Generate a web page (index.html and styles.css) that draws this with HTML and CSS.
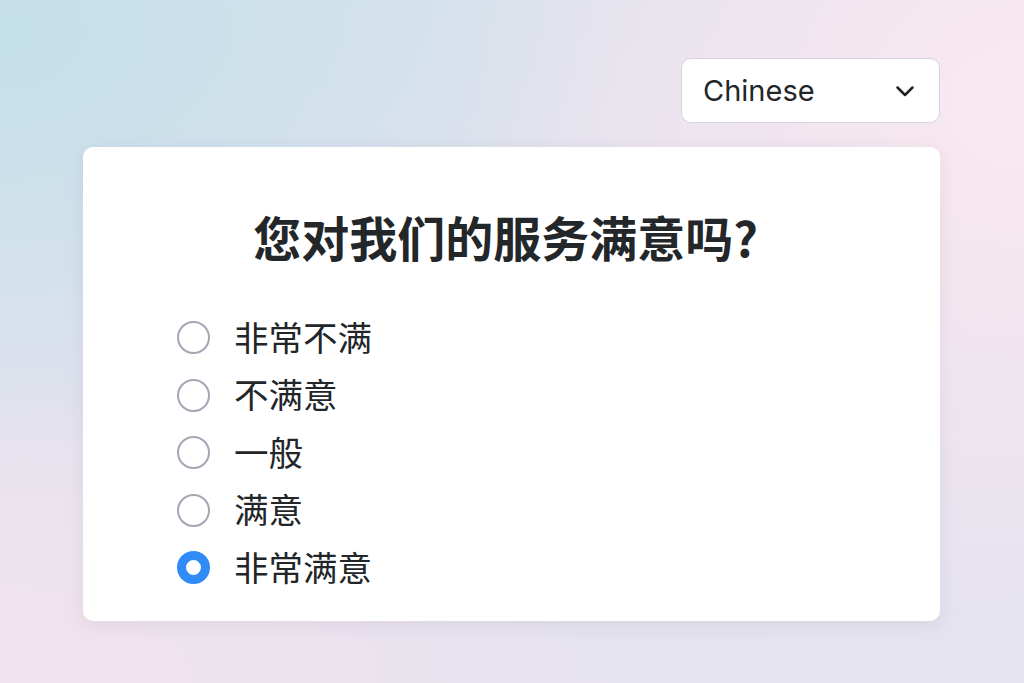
FILE: index.html
```html
<!DOCTYPE html>
<html lang="zh">
<head>
<meta charset="utf-8">
<link rel="stylesheet" href="styles.css">
</head>
<body>
<div class="page">
  <div class="topbar">
    <div class="select">
      <span class="select-label">Chinese</span>
      <svg class="chevron" width="24" height="24" viewBox="0 0 24 24"><path d="M4.5 8.5 L12 16 L19.5 8.5" fill="none" stroke="#222" stroke-width="2.5" stroke-linecap="round" stroke-linejoin="round"/></svg>
    </div>
  </div>
  <div class="card">
    <h1 class="title">您对我们的服务满意吗?</h1>
    <ul class="options">
      <li class="option"><span class="radio"></span><span class="label">非常不满</span></li>
      <li class="option"><span class="radio"></span><span class="label">不满意</span></li>
      <li class="option"><span class="radio"></span><span class="label">一般</span></li>
      <li class="option"><span class="radio"></span><span class="label">满意</span></li>
      <li class="option"><span class="radio checked"></span><span class="label">非常满意</span></li>
    </ul>
  </div>
</div>
</body>
</html>
```
FILE: styles.css
```css
html, body {
  margin: 0;
  padding: 0;
}
body {
  width: 1024px;
  height: 683px;
  overflow: hidden;
  font-family: "Noto Sans", "Noto Sans CJK SC", sans-serif;
  color: #222629;
  background:
    radial-gradient(ellipse 620px 420px at 0% 5%, rgba(196, 224, 234, 1) 0%, rgba(196, 224, 234, 0) 100%),
    radial-gradient(ellipse 600px 520px at 100% 15%, rgba(250, 232, 240, 1) 0%, rgba(250, 232, 240, 0) 100%),
    radial-gradient(ellipse 600px 300px at 0% 100%, rgba(242, 228, 238, 1) 0%, rgba(242, 228, 238, 0) 100%),
    linear-gradient(160deg, #d8e2ec 0%, #e6e2ee 50%, #e5e3ef 100%);
}
.page {
  display: flex;
  flex-direction: column;
  padding: 58px 84px 0 83px;
}
.topbar {
  display: flex;
  justify-content: flex-end;
}
.select {
  box-sizing: border-box;
  width: 259px;
  height: 65px;
  background: #ffffff;
  border: 1.5px solid #d9d2e6;
  border-radius: 10px;
  display: flex;
  align-items: center;
  justify-content: space-between;
  padding: 0 22px 0 21px;
}
.select-label {
  font-family: "Inter", "Noto Sans", sans-serif;
  font-size: 29px;
  color: #222629;
}
.chevron {
  display: block;
}
.card {
  margin-top: 24px;
  background: #ffffff;
  border-radius: 10px;
  box-shadow: 0 4px 18px rgba(120, 110, 150, 0.12);
  padding: 60px 0 24px 94px;
}
.title {
  margin: 0 0 44px -94px;
  padding-right: 12px;
  text-align: center;
  font-size: 48px;
  line-height: 58px;
  font-weight: 600;
  font-family: "Noto Sans CJK SC", sans-serif;
  color: #23272a;
}
.options {
  list-style: none;
  margin: 0;
  padding: 0;
}
.option {
  height: 57.5px;
  display: flex;
  align-items: center;
  gap: 24px;
}
.radio {
  box-sizing: border-box;
  width: 33px;
  height: 33px;
  border-radius: 50%;
  border: 2.5px solid #a4a6b4;
  background: #fff;
  flex: none;
}
.radio.checked {
  border: 9px solid #2f8cf6;
}
.label {
  font-family: "Noto Sans CJK SC", sans-serif;
  font-size: 34.5px;
  line-height: 44px;
  padding-bottom: 4px;
  color: #222629;
}
```
